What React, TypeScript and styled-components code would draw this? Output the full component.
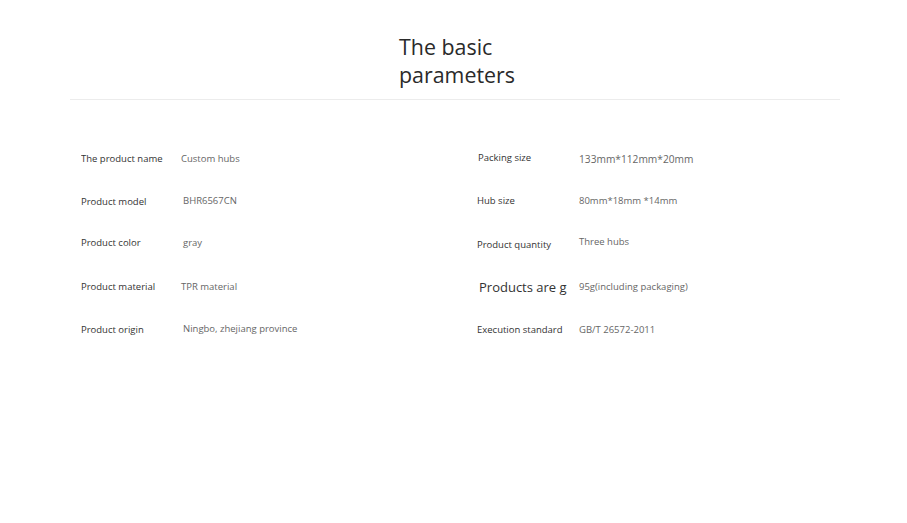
import styled, { createGlobalStyle } from "styled-components";

const GlobalStyle = createGlobalStyle`
  body {
    margin: 0;
    background: #fff;
    font-family: "Open Sans", "Noto Sans", sans-serif;
  }
`;

const Page = styled.div`
  width: 770px;
  margin-left: 70px;
  padding-top: 33px;
`;

const TitleWrap = styled.div`
  display: flex;
  justify-content: center;
  border-bottom: 1px solid #ececec;
  padding-bottom: 10px;
`;

const Title = styled.h2`
  width: 116px;
  margin: 0 0 0 4px;
  font-size: 21.4px;
  font-weight: 400;
  line-height: 28px;
  color: #2a2a2a;
`;

const Grid = styled.div`
  display: grid;
  grid-template-columns: 396px 1fr;
  grid-auto-flow: column;
  grid-template-rows: repeat(5, 43px);
  padding: 37px 0 0 11px;
`;

const Row = styled.div<{ $dy?: number }>`
  display: flex;
  align-items: center;
  transform: translateY(${(p) => p.$dy ?? 0}px);
`;

const Label = styled.span<{ $big?: boolean; $dx?: number }>`
  width: ${(p) => (p.$big ? 88 : 100 - (p.$dx ?? 0))}px;
  margin-left: ${(p) => p.$dx ?? 0}px;
  flex-shrink: 0;
  overflow: hidden;
  white-space: nowrap;
  font-size: ${(p) => (p.$big ? 13 : 9.5)}px;
  color: #333;
`;

const Value = styled.span<{ $dx?: number; $dy?: number; $size?: number }>`
  margin-left: ${(p) => p.$dx ?? 0}px;
  transform: translateY(${(p) => p.$dy ?? 0}px);
  font-size: ${(p) => p.$size ?? 9.5}px;
  color: #666;
  white-space: nowrap;
`;

type Item = {
  label: string;
  value: string;
  ldx?: number;
  vdx?: number;
  rowDy?: number;
  vdy?: number;
  size?: number;
  big?: boolean;
};

const items: Item[] = [
  { label: "The product name", value: "Custom hubs" },
  { label: "Product model", value: "BHR6567CN", vdx: 2, vdy: -1 },
  { label: "Product color", value: "gray", vdx: 2, rowDy: -2 },
  { label: "Product material", value: "TPR material", rowDy: -1 },
  { label: "Product origin", value: "Ningbo, zhejiang province", vdx: 2, rowDy: -1, vdy: -1 },
  { label: "Packing size", value: "133mm*112mm*20mm", ldx: 1, vdx: 2, rowDy: -1, vdy: 1, size: 10.2 },
  { label: "Hub size", value: "80mm*18mm *14mm", vdx: 2, rowDy: -1 },
  { label: "Product quantity", value: "Three hubs", vdx: 2, vdy: -3 },
  { label: "Products are gross weight", value: "95g(including packaging)", ldx: 2, big: true, vdx: 12, rowDy: -1 },
  { label: "Execution standard", value: "GB/T 26572-2011", vdx: 2, rowDy: -1 },
];

export default function App() {
  return (
    <>
      <GlobalStyle />
      <Page>
        <TitleWrap>
          <Title>The basic parameters</Title>
        </TitleWrap>
        <Grid>
          {items.map((it) => (
            <Row key={it.label} $dy={it.rowDy}>
              <Label $dx={it.ldx} $big={it.big}>
                {it.label}
              </Label>
              <Value $dx={it.vdx} $dy={it.vdy} $size={it.size}>
                {it.value}
              </Value>
            </Row>
          ))}
        </Grid>
      </Page>
    </>
  );
}
